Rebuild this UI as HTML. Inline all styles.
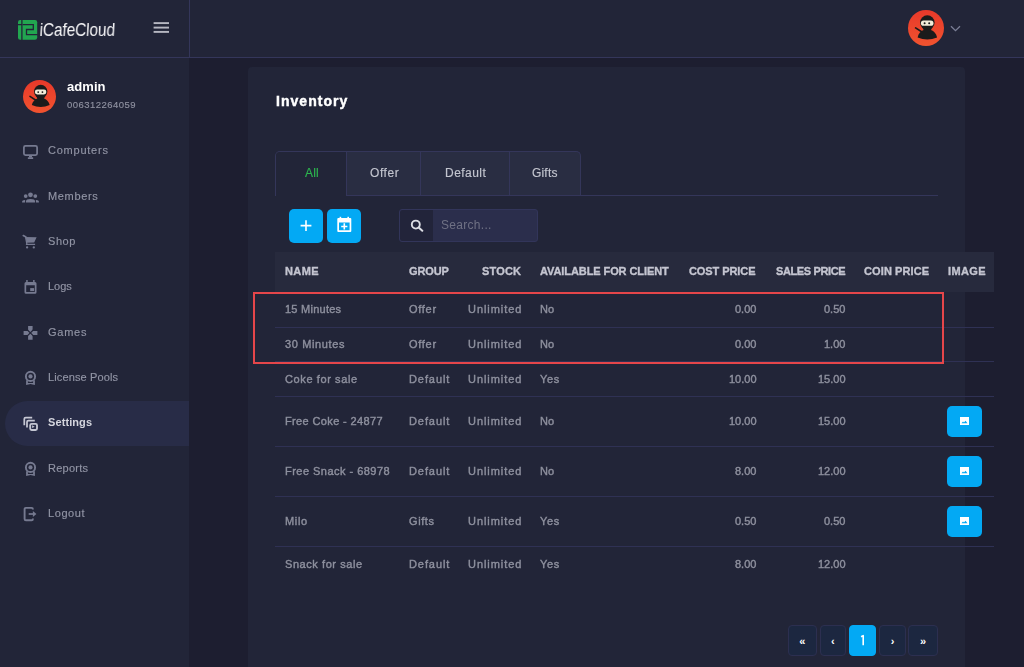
<!DOCTYPE html>
<html><head><meta charset="utf-8">
<style>
*{box-sizing:border-box;margin:0;padding:0}
html,body{width:1024px;height:667px;overflow:hidden;background:#1d1e30;font-family:"Liberation Sans",sans-serif;}
.abs{position:absolute}
.t{position:absolute;white-space:nowrap;line-height:normal;will-change:transform}
.pg{top:625px;height:31px;border:1px solid;border-radius:4px;color:#fff;text-align:center;line-height:31px;font-weight:bold}
</style></head><body>

<div class="abs" style="left:0;top:0;width:1024px;height:57px;background:#222538"></div>
<div class="abs" style="left:0;top:57px;width:1024px;height:1px;background:#34365a"></div>
<div class="abs" style="left:189px;top:0;width:1px;height:57px;background:#34365a"></div>
<div class="abs" style="left:0;top:58px;width:189px;height:609px;background:#222538"></div>
<svg class="abs" style="left:18px;top:20px" width="20" height="20" viewBox="0 0 20 20">
<rect x="0" y="0" width="19.2" height="19.8" rx="2.2" fill="#22a650"/>
<path d="M3.9 0 V20 M0 4.6 H3.9 M4.8 4.6 H15.3 V9.5 H8.5 V14.7 H20" stroke="#222538" stroke-width="1.3" fill="none"/>
</svg>
<div class="t" style="left:39px;top:20px;font-size:18px;color:#f4f4f6;letter-spacing:-0.15px;transform:scaleX(0.86) skewX(-4deg);transform-origin:0 100%">iCafeCloud</div>
<svg class="abs" style="left:153px;top:21px" width="16" height="12" viewBox="0 0 16 12">
<rect x="0.6" y="1.15" width="15.4" height="1.9" fill="#b6b7c1"/><rect x="0.6" y="5.65" width="15.4" height="1.9" fill="#b6b7c1"/><rect x="0.6" y="9.95" width="15.4" height="1.9" fill="#b6b7c1"/>
</svg>
<svg class="abs" style="left:908px;top:10px" width="36" height="36" viewBox="0 0 36 36">
<defs><linearGradient id="g908" x1="0" y1="0" x2="0" y2="1"><stop offset="0" stop-color="#e8392a"/><stop offset="1" stop-color="#f1532f"/></linearGradient></defs>
<circle cx="18" cy="18" r="18" fill="url(#g908)"/>
<path d="M7.6 17.9 L13.6 21.8" stroke="#1b1b1b" stroke-width="1.7" stroke-linecap="round"/>
<path d="M9.6 27.4 C10.4 23.6 12.6 21.2 15.6 20.1 C15 19.2 14.6 18 14.6 17 L24 17 C24 18 23.6 19.2 23 20.1 C26 21.2 28.3 23.6 29.1 27.4 Q19.3 31.6 9.6 27.4 Z" fill="#1b1b1b"/>
<circle cx="19.3" cy="12.6" r="7.3" fill="#1b1b1b"/>
<rect x="12.9" y="10.4" width="12.6" height="5.4" rx="2.6" fill="#f3ecd9"/>
<circle cx="16.6" cy="13.2" r="1" fill="#1b1b1b"/><circle cx="21.2" cy="13.2" r="1" fill="#1b1b1b"/>
</svg>
<svg class="abs" style="left:950px;top:24px" width="11" height="9" viewBox="0 0 11 9"><path d="M1 2.2 L5.5 6.6 L10 2.2" stroke="#7b7f96" stroke-width="1.3" fill="none"/></svg>
<svg class="abs" style="left:23px;top:80px" width="33" height="33" viewBox="0 0 36 36">
<defs><linearGradient id="g23" x1="0" y1="0" x2="0" y2="1"><stop offset="0" stop-color="#e8392a"/><stop offset="1" stop-color="#f1532f"/></linearGradient></defs>
<circle cx="18" cy="18" r="18" fill="url(#g23)"/>
<path d="M7.6 17.9 L13.6 21.8" stroke="#1b1b1b" stroke-width="1.7" stroke-linecap="round"/>
<path d="M9.6 27.4 C10.4 23.6 12.6 21.2 15.6 20.1 C15 19.2 14.6 18 14.6 17 L24 17 C24 18 23.6 19.2 23 20.1 C26 21.2 28.3 23.6 29.1 27.4 Q19.3 31.6 9.6 27.4 Z" fill="#1b1b1b"/>
<circle cx="19.3" cy="12.6" r="7.3" fill="#1b1b1b"/>
<rect x="12.9" y="10.4" width="12.6" height="5.4" rx="2.6" fill="#f3ecd9"/>
<circle cx="16.6" cy="13.2" r="1" fill="#1b1b1b"/><circle cx="21.2" cy="13.2" r="1" fill="#1b1b1b"/>
</svg>
<div class="abs" style="left:5px;top:401px;width:184px;height:45px;background:#282c47;border-radius:23px 0 0 23px"></div>

<svg class="abs" style="left:20px;top:142px" width="22" height="20" viewBox="0 0 22 20" fill="none" stroke="#767a90">
<rect x="3.9" y="3.9" width="13.2" height="9.1" rx="1.6" stroke-width="1.75"/>
<rect x="9" y="13.5" width="3" height="2" fill="#767a90" stroke="none"/>
<rect x="7.8" y="15.3" width="5.4" height="1.7" rx="0.5" fill="#767a90" stroke="none"/>
</svg>
<svg class="abs" style="left:20px;top:187px" width="22" height="20" viewBox="0 0 22 20" fill="#767a90">
<circle cx="10.5" cy="7.8" r="2.4"/><circle cx="5.7" cy="9.1" r="1.9"/><circle cx="15.3" cy="9.1" r="1.9"/>
<path d="M6 15.4 V14 Q6 12 10.5 12 Q15 12 15 14 V15.4 Z"/>
<path d="M2.1 15.4 V14.6 Q2.1 12.9 4.6 12.9 H5.1 V15.4 Z"/>
<path d="M18.9 15.4 V14.6 Q18.9 12.9 16.4 12.9 H15.9 V15.4 Z"/>
</svg>
<svg class="abs" style="left:20px;top:232px" width="22" height="20" viewBox="0 0 22 20" fill="#767a90">
<path d="M3.3 3.6 L5.9 5" stroke="#767a90" stroke-width="1.7" stroke-linecap="round"/>
<path d="M5.4 5 L16.6 5.3 L14.2 10.6 L7.1 10.8 Z"/>
<path d="M5.6 5.2 L6.8 11.6 L6.6 12.4 H15.1" stroke="#767a90" stroke-width="1.3" fill="none"/>
<circle cx="7.1" cy="15.4" r="1.15"/><circle cx="13.8" cy="15.4" r="1.15"/>
</svg>
<svg class="abs" style="left:20px;top:277px" width="22" height="20" viewBox="0 0 22 20" fill="#767a90">
<path fill-rule="evenodd" d="M6 4.9 H15 Q16.5 4.9 16.5 6.4 V15.3 Q16.5 16.8 15 16.8 H6 Q4.5 16.8 4.5 15.3 V6.4 Q4.5 4.9 6 4.9 Z M6.2 8.3 V15.1 H14.8 V8.3 Z"/>
<rect x="6.2" y="3" width="1.5" height="2.5"/><rect x="13.1" y="3" width="1.5" height="2.5"/>
<rect x="10.2" y="11.1" width="3.9" height="3"/>
</svg>
<svg class="abs" style="left:20px;top:323px" width="22" height="20" viewBox="0 0 22 20" fill="#767a90">
<path d="M8.1 3 H12.6 V7.9 H17.4 V12 H12.6 V16.8 H8.1 V12 H3.6 V7.9 H8.1 Z"/>
<path d="M7.2 6.8 L13.6 13.1 M13.5 6.8 L7.1 13.1" stroke="#222538" stroke-width="1.2"/>
</svg>
<svg class="abs" style="left:20px;top:368px" width="22" height="20" viewBox="0 0 22 20" fill="#767a90">
<circle cx="10.5" cy="8.4" r="4.6" fill="none" stroke="#767a90" stroke-width="1.9"/>
<circle cx="10.5" cy="8.4" r="2.1"/>
<path d="M6.1 12.2 H7.9 V15 H13.1 V12.2 H14.9 V16.9 L10.5 15.9 L6.1 16.9 Z"/>
</svg><svg class="abs" style="left:20px;top:459px" width="22" height="20" viewBox="0 0 22 20" fill="#767a90">
<circle cx="10.5" cy="8.4" r="4.6" fill="none" stroke="#767a90" stroke-width="1.9"/>
<circle cx="10.5" cy="8.4" r="2.1"/>
<path d="M6.1 12.2 H7.9 V15 H13.1 V12.2 H14.9 V16.9 L10.5 15.9 L6.1 16.9 Z"/>
</svg>
<svg class="abs" style="left:20px;top:413px" width="22" height="20" viewBox="0 0 22 20" fill="none" stroke="#c5c7d3" stroke-width="1.75">
<path d="M4.3 12.3 V6 Q4.3 4.6 5.7 4.6 H12.2"/>
<path d="M7 14.6 V9 Q7 7.7 8.4 7.7 H14.8"/>
<rect x="10.2" y="10.9" width="6.8" height="6.1" rx="1.4" stroke-width="1.85"/>
<path d="M12.1 12.3 V15.1 L14.7 13.7 Z" fill="#c5c7d3" stroke="none"/>
</svg>
<svg class="abs" style="left:20px;top:503px" width="22" height="20" viewBox="0 0 22 20" fill="none" stroke="#767a90" stroke-width="1.9">
<path d="M12.9 6.5 V6.2 Q12.9 4.9 11.6 4.9 H5.9 Q4.6 4.9 4.6 6.2 V15.9 Q4.6 17.2 5.9 17.2 H11.6 Q12.9 17.2 12.9 15.9 V15.5"/>
<path d="M8.7 11 H14" stroke-width="1.7"/>
<path d="M12.9 8.1 L16.4 11 L12.9 13.9 Z" fill="#767a90" stroke="none"/>
</svg>

<div class="abs" style="left:248px;top:67px;width:717px;height:620px;background:#222538;border-radius:4px"></div>
<div class="abs" style="left:275px;top:195px;width:663px;height:1px;background:#34365a"></div>
<div class="abs" style="left:275px;top:151px;width:306px;height:44px;border:1px solid #34365a;border-bottom:none;border-radius:5px 5px 0 0;background:#292d42"></div>
<div class="abs" style="left:276px;top:152px;width:70px;height:44px;background:#222538;border-radius:4px 0 0 0"></div>
<div class="abs" style="left:346px;top:152px;width:1px;height:43px;background:#34365a"></div>
<div class="abs" style="left:420px;top:152px;width:1px;height:43px;background:#34365a"></div>
<div class="abs" style="left:509px;top:152px;width:1px;height:43px;background:#34365a"></div>
<div class="abs" style="left:289px;top:209px;width:34px;height:34px;background:#03a9f4;border-radius:5px"></div>
<svg class="abs" style="left:300px;top:220px" width="12" height="12" viewBox="0 0 12 12"><path d="M6 0.2 V11 M0.6 5.6 H11.4" stroke="#fff" stroke-width="1.6"/></svg>
<div class="abs" style="left:327px;top:209px;width:34px;height:34px;background:#03a9f4;border-radius:5px"></div>
<svg class="abs" style="left:337px;top:216px" width="15" height="17" viewBox="0 0 15 17" fill="#fff">
<path fill-rule="evenodd" d="M1.3 2 H13.3 Q14.3 2 14.3 3 V15 Q14.3 16 13.3 16 H1.3 Q0.3 16 0.3 15 V3 Q0.3 2 1.3 2 Z M2 6.5 V14.3 H12.6 V6.5 Z"/>
<rect x="2.6" y="0.8" width="1.6" height="2"/><rect x="10.4" y="0.8" width="1.6" height="2"/>
<path d="M7.3 7.3 V13.6 M4.2 10.45 H10.4" stroke="#fff" stroke-width="1.6"/>
</svg>
<div class="abs" style="left:399px;top:209px;width:139px;height:33px;border:1px solid #32355a;border-radius:3px;background:#2b2e4c"></div>
<div class="abs" style="left:400px;top:210px;width:33px;height:31px;background:#22243a;border-radius:3px 0 0 3px"></div>
<svg class="abs" style="left:410px;top:219px" width="14" height="13" viewBox="0 0 14 13"><circle cx="5.8" cy="5.6" r="4" stroke="#dcdde3" stroke-width="1.9" fill="none"/><path d="M8.7 8.5 L12.3 11.8" stroke="#dcdde3" stroke-width="2" stroke-linecap="round"/></svg>
<div class="abs" style="left:275px;top:252px;width:719px;height:40px;background:#272a3d"></div>
<div class="abs" style="left:275px;top:327px;width:719px;height:1px;background:#2f3154"></div>
<div class="abs" style="left:275px;top:361px;width:719px;height:1px;background:#2f3154"></div>
<div class="abs" style="left:275px;top:396px;width:719px;height:1px;background:#2f3154"></div>
<div class="abs" style="left:275px;top:446px;width:719px;height:1px;background:#2f3154"></div>
<div class="abs" style="left:275px;top:496px;width:719px;height:1px;background:#2f3154"></div>
<div class="abs" style="left:275px;top:546px;width:719px;height:1px;background:#2f3154"></div>
<div class="abs" style="left:947px;top:406px;width:35px;height:31px;background:#03a9f4;border-radius:5px"></div>
<svg class="abs" style="left:960px;top:417px" width="9" height="8" viewBox="0 0 9 8"><rect width="9" height="8" fill="#fff"/><path d="M1.5 6.3 L3 4.6 L4 5.6 L5.5 3.8 L7.5 6.3 Z" fill="#03a9f4"/></svg>
<div class="abs" style="left:947px;top:456px;width:35px;height:31px;background:#03a9f4;border-radius:5px"></div>
<svg class="abs" style="left:960px;top:467px" width="9" height="8" viewBox="0 0 9 8"><rect width="9" height="8" fill="#fff"/><path d="M1.5 6.3 L3 4.6 L4 5.6 L5.5 3.8 L7.5 6.3 Z" fill="#03a9f4"/></svg>
<div class="abs" style="left:947px;top:506px;width:35px;height:31px;background:#03a9f4;border-radius:5px"></div>
<svg class="abs" style="left:960px;top:517px" width="9" height="8" viewBox="0 0 9 8"><rect width="9" height="8" fill="#fff"/><path d="M1.5 6.3 L3 4.6 L4 5.6 L5.5 3.8 L7.5 6.3 Z" fill="#03a9f4"/></svg>
<div class="t" style="top:79px;font-size:13px;color:#ffffff;letter-spacing:0.065px;font-weight:bold;left:66.60px;">admin</div>
<div class="t" style="top:99px;font-size:9.5px;color:#8f91a0;letter-spacing:0.471px;left:66.90px;-webkit-text-stroke:0.15px;">006312264059</div>
<div class="t" style="top:144px;font-size:11px;color:#9295a5;letter-spacing:0.763px;left:47.80px;-webkit-text-stroke:0.15px;">Computers</div>
<div class="t" style="top:190px;font-size:11px;color:#9295a5;letter-spacing:0.660px;left:47.80px;-webkit-text-stroke:0.15px;">Members</div>
<div class="t" style="top:235px;font-size:11px;color:#9295a5;letter-spacing:0.543px;left:47.80px;-webkit-text-stroke:0.15px;">Shop</div>
<div class="t" style="top:280px;font-size:11px;color:#9295a5;letter-spacing:-0.051px;left:47.80px;-webkit-text-stroke:0.15px;">Logs</div>
<div class="t" style="top:326px;font-size:11px;color:#9295a5;letter-spacing:0.736px;left:47.80px;-webkit-text-stroke:0.15px;">Games</div>
<div class="t" style="top:371px;font-size:11px;color:#9295a5;letter-spacing:0.134px;left:47.80px;-webkit-text-stroke:0.15px;">License Pools</div>
<div class="t" style="top:416px;font-size:11px;color:#d5d6de;letter-spacing:0.089px;font-weight:bold;left:47.80px;">Settings</div>
<div class="t" style="top:462px;font-size:11px;color:#9295a5;letter-spacing:0.247px;left:47.80px;-webkit-text-stroke:0.15px;">Reports</div>
<div class="t" style="top:507px;font-size:11px;color:#9295a5;letter-spacing:0.582px;left:47.80px;-webkit-text-stroke:0.15px;">Logout</div>
<div class="t" style="top:93px;font-size:14px;color:#ffffff;letter-spacing:1.047px;font-weight:bold;left:275.90px;-webkit-text-stroke:0.45px;">Inventory</div>
<div class="t" style="top:166px;font-size:12px;color:#2db54f;letter-spacing:0.165px;left:304.90px;-webkit-text-stroke:0.15px;">All</div>
<div class="t" style="top:166px;font-size:12px;color:#c3c5cf;letter-spacing:0.560px;left:370.20px;-webkit-text-stroke:0.15px;">Offer</div>
<div class="t" style="top:166px;font-size:12px;color:#c3c5cf;letter-spacing:0.469px;left:444.60px;-webkit-text-stroke:0.15px;">Default</div>
<div class="t" style="top:166px;font-size:12px;color:#c3c5cf;letter-spacing:0.183px;left:532.10px;-webkit-text-stroke:0.15px;">Gifts</div>
<div class="t" style="top:218px;font-size:12px;color:#6f7184;letter-spacing:0.289px;left:440.60px;">Search...</div>
<div class="t" style="top:265px;font-size:11px;color:#c4c5d0;letter-spacing:0.416px;font-weight:bold;left:285.10px;-webkit-text-stroke:0.35px;">NAME</div>
<div class="t" style="top:265px;font-size:11px;color:#c4c5d0;letter-spacing:-0.100px;font-weight:bold;left:409.10px;-webkit-text-stroke:0.35px;">GROUP</div>
<div class="t" style="top:265px;font-size:11px;color:#c4c5d0;letter-spacing:0.186px;font-weight:bold;left:481.90px;-webkit-text-stroke:0.35px;">STOCK</div>
<div class="t" style="top:265px;font-size:11px;color:#c4c5d0;letter-spacing:-0.086px;font-weight:bold;left:540.00px;-webkit-text-stroke:0.35px;">AVAILABLE FOR CLIENT</div>
<div class="t" style="top:265px;font-size:11px;color:#c4c5d0;letter-spacing:-0.077px;font-weight:bold;left:689.40px;-webkit-text-stroke:0.35px;">COST PRICE</div>
<div class="t" style="top:265px;font-size:11px;color:#c4c5d0;letter-spacing:-0.381px;font-weight:bold;left:775.60px;-webkit-text-stroke:0.35px;">SALES PRICE</div>
<div class="t" style="top:265px;font-size:11px;color:#c4c5d0;letter-spacing:0.107px;font-weight:bold;left:864.20px;-webkit-text-stroke:0.35px;">COIN PRICE</div>
<div class="t" style="top:265px;font-size:11px;color:#c4c5d0;letter-spacing:0.370px;font-weight:bold;left:947.90px;-webkit-text-stroke:0.35px;">IMAGE</div>
<div class="t" style="top:303px;font-size:11px;color:#8e909e;letter-spacing:0.255px;left:284.60px;-webkit-text-stroke:0.4px;">15 Minutes</div>
<div class="t" style="top:303px;font-size:11px;color:#8e909e;letter-spacing:0.703px;left:408.80px;-webkit-text-stroke:0.4px;">Offer</div>
<div class="t" style="top:303px;font-size:11px;color:#8e909e;letter-spacing:0.934px;right:501.87px;-webkit-text-stroke:0.4px;">Unlimited</div>
<div class="t" style="top:303px;font-size:11px;color:#8e909e;letter-spacing:0.056px;left:539.60px;-webkit-text-stroke:0.4px;">No</div>
<div class="t" style="top:303px;font-size:11px;color:#8e909e;letter-spacing:0.000px;right:267.80px;-webkit-text-stroke:0.4px;">0.00</div>
<div class="t" style="top:303px;font-size:11px;color:#8e909e;letter-spacing:0.000px;right:178.90px;-webkit-text-stroke:0.4px;">0.50</div>
<div class="t" style="top:338px;font-size:11px;color:#8e909e;letter-spacing:0.632px;left:284.60px;-webkit-text-stroke:0.4px;">30 Minutes</div>
<div class="t" style="top:338px;font-size:11px;color:#8e909e;letter-spacing:0.703px;left:408.80px;-webkit-text-stroke:0.4px;">Offer</div>
<div class="t" style="top:338px;font-size:11px;color:#8e909e;letter-spacing:0.934px;right:501.87px;-webkit-text-stroke:0.4px;">Unlimited</div>
<div class="t" style="top:338px;font-size:11px;color:#8e909e;letter-spacing:0.056px;left:539.60px;-webkit-text-stroke:0.4px;">No</div>
<div class="t" style="top:338px;font-size:11px;color:#8e909e;letter-spacing:0.000px;right:267.80px;-webkit-text-stroke:0.4px;">0.00</div>
<div class="t" style="top:338px;font-size:11px;color:#8e909e;letter-spacing:0.000px;right:178.90px;-webkit-text-stroke:0.4px;">1.00</div>
<div class="t" style="top:373px;font-size:11px;color:#8e909e;letter-spacing:0.609px;left:284.60px;-webkit-text-stroke:0.4px;">Coke for sale</div>
<div class="t" style="top:373px;font-size:11px;color:#8e909e;letter-spacing:0.917px;left:408.80px;-webkit-text-stroke:0.4px;">Default</div>
<div class="t" style="top:373px;font-size:11px;color:#8e909e;letter-spacing:0.934px;right:501.87px;-webkit-text-stroke:0.4px;">Unlimited</div>
<div class="t" style="top:373px;font-size:11px;color:#8e909e;letter-spacing:0.628px;left:539.60px;-webkit-text-stroke:0.4px;">Yes</div>
<div class="t" style="top:373px;font-size:11px;color:#8e909e;letter-spacing:0.000px;right:267.80px;-webkit-text-stroke:0.4px;">10.00</div>
<div class="t" style="top:373px;font-size:11px;color:#8e909e;letter-spacing:0.000px;right:178.90px;-webkit-text-stroke:0.4px;">15.00</div>
<div class="t" style="top:415px;font-size:11px;color:#8e909e;letter-spacing:0.369px;left:284.60px;-webkit-text-stroke:0.4px;">Free Coke - 24877</div>
<div class="t" style="top:415px;font-size:11px;color:#8e909e;letter-spacing:0.917px;left:408.80px;-webkit-text-stroke:0.4px;">Default</div>
<div class="t" style="top:415px;font-size:11px;color:#8e909e;letter-spacing:0.934px;right:501.87px;-webkit-text-stroke:0.4px;">Unlimited</div>
<div class="t" style="top:415px;font-size:11px;color:#8e909e;letter-spacing:0.056px;left:539.60px;-webkit-text-stroke:0.4px;">No</div>
<div class="t" style="top:415px;font-size:11px;color:#8e909e;letter-spacing:0.000px;right:267.80px;-webkit-text-stroke:0.4px;">10.00</div>
<div class="t" style="top:415px;font-size:11px;color:#8e909e;letter-spacing:0.000px;right:178.90px;-webkit-text-stroke:0.4px;">15.00</div>
<div class="t" style="top:465px;font-size:11px;color:#8e909e;letter-spacing:0.471px;left:284.60px;-webkit-text-stroke:0.4px;">Free Snack - 68978</div>
<div class="t" style="top:465px;font-size:11px;color:#8e909e;letter-spacing:0.917px;left:408.80px;-webkit-text-stroke:0.4px;">Default</div>
<div class="t" style="top:465px;font-size:11px;color:#8e909e;letter-spacing:0.934px;right:501.87px;-webkit-text-stroke:0.4px;">Unlimited</div>
<div class="t" style="top:465px;font-size:11px;color:#8e909e;letter-spacing:0.056px;left:539.60px;-webkit-text-stroke:0.4px;">No</div>
<div class="t" style="top:465px;font-size:11px;color:#8e909e;letter-spacing:0.000px;right:267.80px;-webkit-text-stroke:0.4px;">8.00</div>
<div class="t" style="top:465px;font-size:11px;color:#8e909e;letter-spacing:0.000px;right:178.90px;-webkit-text-stroke:0.4px;">12.00</div>
<div class="t" style="top:515px;font-size:11px;color:#8e909e;letter-spacing:0.650px;left:284.60px;-webkit-text-stroke:0.4px;">Milo</div>
<div class="t" style="top:515px;font-size:11px;color:#8e909e;letter-spacing:0.572px;left:408.80px;-webkit-text-stroke:0.4px;">Gifts</div>
<div class="t" style="top:515px;font-size:11px;color:#8e909e;letter-spacing:0.934px;right:501.87px;-webkit-text-stroke:0.4px;">Unlimited</div>
<div class="t" style="top:515px;font-size:11px;color:#8e909e;letter-spacing:0.628px;left:539.60px;-webkit-text-stroke:0.4px;">Yes</div>
<div class="t" style="top:515px;font-size:11px;color:#8e909e;letter-spacing:0.000px;right:267.80px;-webkit-text-stroke:0.4px;">0.50</div>
<div class="t" style="top:515px;font-size:11px;color:#8e909e;letter-spacing:0.000px;right:178.90px;-webkit-text-stroke:0.4px;">0.50</div>
<div class="t" style="top:558px;font-size:11px;color:#8e909e;letter-spacing:0.571px;left:284.60px;-webkit-text-stroke:0.4px;">Snack for sale</div>
<div class="t" style="top:558px;font-size:11px;color:#8e909e;letter-spacing:0.917px;left:408.80px;-webkit-text-stroke:0.4px;">Default</div>
<div class="t" style="top:558px;font-size:11px;color:#8e909e;letter-spacing:0.934px;right:501.87px;-webkit-text-stroke:0.4px;">Unlimited</div>
<div class="t" style="top:558px;font-size:11px;color:#8e909e;letter-spacing:0.628px;left:539.60px;-webkit-text-stroke:0.4px;">Yes</div>
<div class="t" style="top:558px;font-size:11px;color:#8e909e;letter-spacing:0.000px;right:267.80px;-webkit-text-stroke:0.4px;">8.00</div>
<div class="t" style="top:558px;font-size:11px;color:#8e909e;letter-spacing:0.000px;right:178.90px;-webkit-text-stroke:0.4px;">12.00</div>
<div class="abs" style="left:253px;top:292px;width:691px;height:72px;border:2px solid #e5464a"></div>
<div class="abs pg" style="left:788px;width:28.5px;background:#1c2740;border-color:#2c2f50;font-size:11px">&laquo;</div>
<div class="abs pg" style="left:820px;width:25.5px;background:#1c2740;border-color:#2c2f50;font-size:11px">&lsaquo;</div>
<div class="abs pg" style="left:849px;width:27px;background:#03a9f4;border-color:#03a9f4;font-size:13px"></div>
<div class="abs pg" style="left:879px;width:27px;background:#1c2740;border-color:#2c2f50;font-size:11px">&rsaquo;</div>
<div class="abs pg" style="left:908px;width:30px;background:#1c2740;border-color:#2c2f50;font-size:11px">&raquo;</div>
<svg class="abs" style="left:858px;top:634px" width="9" height="13" viewBox="0 0 9 13"><path d="M3.1 2.7 L5.2 1.6 V11.3" stroke="#fff" stroke-width="1.6" fill="none" stroke-linejoin="round"/></svg>
</body></html>
